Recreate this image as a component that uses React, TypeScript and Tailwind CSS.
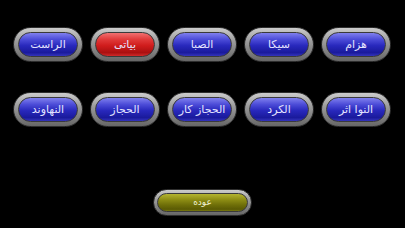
const rowOne = ["هزام", "سيكا", "الصبا", "بياتى", "الراست"];
const rowTwo = ["النوا اثر", "الكرد", "الحجاز كار", "الحجاز", "النهاوند"];

const ring =
  "rounded-full border border-[#2e2e2e] bg-[linear-gradient(to_bottom,#cccccc_0%,#9c9c9c_40%,#666666_100%)]";
const blue =
  "bg-[linear-gradient(to_bottom,#8080ee_0%,#4c4cd8_28%,#2828bc_55%,#1a1a9c_85%,#3434bc_100%)]";
const red =
  "bg-[linear-gradient(to_bottom,#f07070_0%,#e03a3a_28%,#d01c1c_55%,#aa1010_85%,#d02a2a_100%)]";

function Pill({ label, active }: { label: string; active?: boolean }) {
  return (
    <div className={`h-[35px] w-[70px] p-[4px] ${ring}`}>
      <div
        className={`flex h-full w-full items-center justify-center rounded-full border border-[#3a3a3a] ${active ? red : blue}`}
      >
        <span className="text-[11px] leading-none text-[#e4e4ff] [font-family:'DejaVu_Sans',sans-serif]">
          {label}
        </span>
      </div>
    </div>
  );
}

export default function App() {
  return (
    <div className="h-[228px] w-[405px] overflow-hidden bg-black pl-[13px] pt-[27px]">
      <div className="flex flex-row-reverse justify-end gap-[7px] pr-[14px]">
        {rowOne.map((label) => (
          <Pill key={label} label={label} active={label === "بياتى"} />
        ))}
      </div>
      <div className="mt-[30px] flex flex-row-reverse justify-end gap-[7px] pr-[14px]">
        {rowTwo.map((label) => (
          <Pill key={label} label={label} />
        ))}
      </div>
      <div className="mt-[62px] pl-[140px]">
        <div className={`h-[27px] w-[99px] p-[3px] ${ring}`}>
          <div className="flex h-full w-full items-center justify-center rounded-full border border-[#3a3a3a] bg-[linear-gradient(to_bottom,#b4b430_0%,#8c8c14_35%,#6e6e08_65%,#5a5a04_90%,#7a7a10_100%)]">
            <span className="text-[9px] leading-none text-[#f0f0d0] [font-family:'DejaVu_Sans',sans-serif]">
              عوده
            </span>
          </div>
        </div>
      </div>
    </div>
  );
}
